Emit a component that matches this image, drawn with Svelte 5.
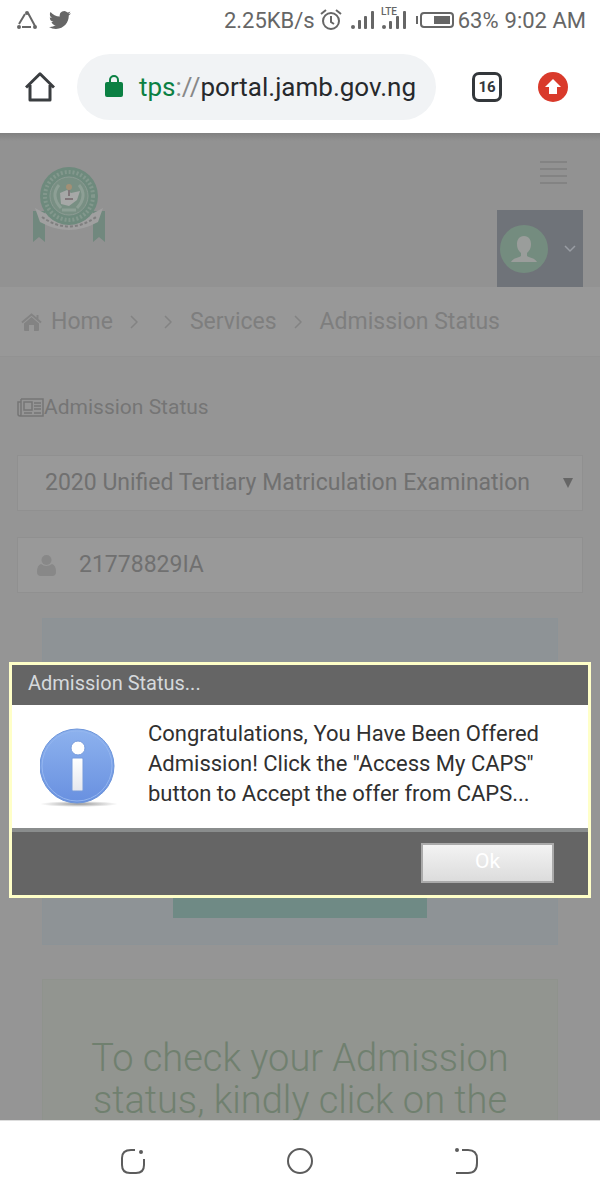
<script lang="ts">
    let examYear = "2020";
    let regNumber = "21778829IA";
    let showDialog = true;

    const crumbs = ["", "Services", "Admission Status"];

    const closeDialog = () => {
        showDialog = false;
    }
</script>

<div class="screen">
    <div class="status-bar">
        <div class="status-left">
            <svg width="20" height="18" viewBox="0 0 20 18" fill="none" stroke="#666" stroke-width="2"><path d="M8 3L2 13M11 2l7 13M5 16h9"/><circle cx="10" cy="2" r="1" fill="#666"/><circle cx="2" cy="16" r="1" fill="#666"/><circle cx="18" cy="16" r="1" fill="#666"/></svg>
            <svg width="22" height="20" viewBox="0 2 24 20" fill="#666"><path d="M23.95 4.57a10 10 0 01-2.82.77 4.96 4.96 0 002.16-2.72c-.95.55-2 .95-3.13 1.18a4.92 4.92 0 00-8.38 4.48C7.69 8.09 4.07 6.13 1.64 3.16a4.82 4.82 0 00-.67 2.48c0 1.71.87 3.21 2.19 4.1a4.9 4.9 0 01-2.23-.62v.06a4.92 4.92 0 003.95 4.83 5 5 0 01-2.21.08 4.94 4.94 0 004.6 3.42A9.87 9.87 0 010 19.54a14 14 0 007.55 2.21c9.05 0 14-7.5 14-13.98 0-.21 0-.42-.02-.63a9.94 9.94 0 002.46-2.55z"/></svg>
        </div>
        <div class="status-right">
            <span>2.25KB/s</span>
            <svg class="alarm" width="22" height="22" viewBox="0 0 22 22" fill="none" stroke="#666" stroke-width="2"><circle cx="11" cy="12" r="8"/><path d="M11 7v6l3 2M1 5l5-4M21 5l-5-4"/></svg>
            <svg class="signal" width="58" height="28" viewBox="0 0 58 28" fill="#666"><circle cx="3" cy="25" r="2"/><rect x="8" y="18" width="3" height="9" rx="1"/><rect x="14" y="14" width="3" height="13" rx="1"/><rect x="21" y="9" width="3" height="18" rx="1"/><circle cx="34" cy="25" r="2"/><rect x="39" y="19" width="3" height="8" rx="1"/><rect x="46" y="14" width="3" height="13" rx="1"/><rect x="53" y="9" width="3" height="18" rx="1"/><text x="31" y="13" font-size="10" font-weight="500">LTE</text></svg>
            <svg class="battery" width="38" height="16" viewBox="0 0 38 16"><rect x="0" y="4" width="2" height="8" fill="#666"/><rect x="5" y="1" width="32" height="14" rx="3" fill="none" stroke="#666" stroke-width="2"/><rect x="18" y="4" width="16" height="8" fill="#666"/></svg>
            <span>63%</span>
            <span class="clock">9:02 AM</span>
        </div>
    </div>

    <div class="browser-bar">
        <button class="icon-btn" aria-label="Home page">
            <svg width="30" height="30" viewBox="0 0 30 30" fill="none" stroke="#3a3d40" stroke-width="3"><path d="M1 15.500L15 1.800l14 13.700M5 13v15h20V13" stroke-linejoin="round"/></svg>
        </button>
        <div class="address">
            <svg width="18" height="23" viewBox="0 0 18 23"><rect y="7" width="18" height="15" rx="2" fill="#0b8043"/><path d="M5 8V5a4 4 0 018 0v3" fill="none" stroke="#0b8043" stroke-width="2"/></svg>
            <div class="url"><span class="scheme">tps</span><span class="slashes">://</span>portal.jamb.gov.ng</div>
        </div>
        <button class="tabs">16</button>
        <button class="icon-btn" aria-label="Update">
            <svg width="30" height="30" viewBox="0 0 30 30"><circle cx="15" cy="15" r="15" fill="#d93a2b"/><path d="M15 7l8 8h-4v7h-8v-7H7z" fill="#fff"/></svg>
        </button>
    </div>

    <div class="viewport">
        <div class="site-header">
            <svg class="logo" width="74" height="80" viewBox="0 0 74 80">
                <path d="M1 46h12v31l-6-5-6 5zM61 46h12v31l-6-5-6 5z" fill="#71887e"/>
                <path d="M3 43Q37 64 71 43L66 57Q37 73 8 57z" fill="#a0a0a0"/>
                <circle cx="37" cy="31" r="29" fill="#6e8a7d"/>
                <circle cx="37" cy="31" r="24" fill="none" stroke="#83988d" stroke-width="4" stroke-dasharray="2 2"/>
                <circle cx="37" cy="31" r="19" fill="#788f83" stroke="#8d9c94" stroke-width="1"/>
                <path d="M27 20q-9 11 2 23M47 20q9 11-2 23" fill="none" stroke="#8d9f95" stroke-width="3"/>
                <path d="M28 28l7-3 4 3 9-2-3 9-4 3-4 3-8-2z" fill="#a6a8a7"/>
                <path d="M30 45h14" stroke="#8d9f95" stroke-width="3"/>
                <circle cx="37" cy="22" r="3" fill="#a29075"/><path d="M37 25v6M33 34h8" stroke="#807679" stroke-width="2"/>
                <path d="M10 52Q37 71 64 52" fill="none" stroke="#7f7f7f" stroke-width="2" stroke-dasharray="3 2"/>
            </svg>
            <div class="header-right">
                <button class="menu" aria-label="Menu"><span></span><span></span><span></span><span></span></button>
                <button class="account" aria-label="Account">
                    <svg width="48" height="48" viewBox="0 0 48 48"><circle cx="24" cy="24" r="24" fill="#748c7f"/><path d="M24 11c-5 0-7 4-7 8 0 5 2 7 4 9v3c-3 2-8 2-10 6h26c-2-4-7-4-10-6v-3c2-2 4-4 4-9 0-4-2-8-7-8z" fill="#9a9d9b"/></svg>
                    <svg width="12" height="8" viewBox="0 0 12 8" fill="none" stroke="#999da3" stroke-width="1.500"><path d="M1 1l5 5 5-5"/></svg>
                </button>
            </div>
        </div>

        <nav class="crumbs">
            <a href="#home"><svg width="21" height="18" viewBox="0 0 21 18" fill="#838383"><path d="M10.500 4L18 10.500V17a1 1 0 01-1 1h-4v-6H8v6H4a1 1 0 01-1-1v-6.500z"/><path d="M1 9.500L10.500 1.500 20 9.500M16.500 2v5" fill="none" stroke="#838383" stroke-width="2"/></svg>Home</a>
            {#each crumbs as crumb}
                <svg class="sep" width="8" height="14" viewBox="0 0 8 14" fill="none" stroke="#838383" stroke-width="1.500"><path d="M1 1l6 6-6 6"/></svg>
                {#if crumb !== ""}
                    <a href="#crumb">{crumb}</a>
                {/if}
            {/each}
        </nav>

        <div class="content">
            <h1>
                <svg width="27" height="19" viewBox="0 0 27 19" fill="none" stroke="#757575" stroke-width="1.500"><path d="M4 1h22v17H3q-2 0-2-2V4h3M4 1v15q0 2-1 2M7 4h8v8H7zM17 5h7M17 8h7M17 11h7M7 15h8M17 15h7"/></svg>Admission Status
            </h1>
            <div class="select-box">
                <select bind:value={examYear} aria-label="Examination">
                    <option value="2020">2020 Unified Tertiary Matriculation Examination</option>
                </select>
                <span class="arrow"></span>
            </div>
            <label class="input-box">
                <svg width="19" height="21" viewBox="0 0 19 21" fill="#888"><circle cx="9.500" cy="5" r="5"/><path d="M4 9q5 4 11 0 4 1 4 8 0 4-4 4H4q-4 0-4-4 0-7 4-8z"/></svg>
                <input type="text" bind:value={regNumber} aria-label="Registration number" />
            </label>
            <div class="card caps">
                <button class="access">Access My CAPS</button>
            </div>
            <div class="card hint">
                <h2>To check your Admission status, kindly click on the</h2>
            </div>
        </div>

        {#if showDialog}
            <div class="overlay">
                <div class="dialog" role="dialog" aria-labelledby="dialog-title">
                    <div class="dialog-title" id="dialog-title">Admission Status...</div>
                    <div class="dialog-body">
                        <svg width="80" height="80" viewBox="0 0 80 80">
                            <defs>
                                <linearGradient id="blue" x1="0" y1="0" x2="0" y2="1"><stop offset="0" stop-color="#8db2ee"/><stop offset="1" stop-color="#6890e0"/></linearGradient>
                                <linearGradient id="stem" x1="0" y1="0" x2="0" y2="1"><stop offset="0" stop-color="#fff"/><stop offset="1" stop-color="#e6e8ee"/></linearGradient>
                                <radialGradient id="shade"><stop offset="0" stop-color="#999"/><stop offset="1" stop-color="#fff"/></radialGradient>
                            </defs>
                            <ellipse cx="39" cy="76" rx="39" ry="3" fill="url(#shade)"/>
                            <circle cx="37" cy="38" r="37" fill="url(#blue)" stroke="#6d95da"/>
                            <circle cx="37" cy="38" r="35" fill="none" stroke="#94b6ef"/>
                            <circle cx="38" cy="20" r="7" fill="#fff" stroke="#769bdc"/>
                            <rect x="32" y="30" width="11" height="33" rx="1" fill="url(#stem)" stroke="#769bdc"/>
                        </svg>
                        <p>Congratulations, You Have Been Offered Admission! Click the "Access My CAPS" button to Accept the offer from CAPS...</p>
                    </div>
                    <div class="dialog-footer">
                        <button class="ok" on:click={closeDialog}>Ok</button>
                    </div>
                </div>
            </div>
        {/if}
    </div>

    <div class="nav-bar">
        <button class="icon-btn" aria-label="Recent apps">
            <svg width="26" height="26" viewBox="0 0 26 26" fill="none" stroke="#5c5c5c" stroke-width="2"><path d="M15 2H11Q2 2 2 10v7q0 8 8 8h6q8 0 8-8v-6"/><circle cx="21" cy="4" r="1" fill="#5c5c5c"/></svg>
        </button>
        <button class="icon-btn" aria-label="Home">
            <svg width="28" height="28" viewBox="0 0 28 28" fill="none" stroke="#5c5c5c" stroke-width="2"><circle cx="14" cy="14" r="12"/></svg>
        </button>
        <button class="icon-btn" aria-label="Back">
            <svg width="26" height="26" viewBox="0 0 26 26" fill="none" stroke="#5c5c5c" stroke-width="2"><path d="M8 2h6q9 0 9 9v4q0 10-9 10H2"/><circle cx="3" cy="2" r="1" fill="#5c5c5c"/></svg>
        </button>
    </div>
</div>

<style>
    :global(body) {
        margin: 0;
    }
    .screen {
        display: flex;
        flex-direction: column;
        height: 100vh;
        background: #fff;
        font-family: Roboto, "Liberation Sans", sans-serif;
    }
    button, input, select {
        font-family: inherit;
    }
    button {
        cursor: pointer;
    }
    svg {
        display: block;
        flex: none;
    }
    .icon-btn {
        padding: 0;
        border: 0;
        background: none;
    }

    .status-bar {
        display: flex;
        justify-content: space-between;
        align-items: center;
        height: 40px;
        padding: 0 14px 0 17px;
        color: #666;
        font-size: 22px;
    }
    .status-left, .status-right {
        display: flex;
        align-items: center;
    }
    .status-left {
        gap: 12px;
    }
    .alarm {
        margin: 0 8px 0 5px;
    }
    .signal {
        margin: 0 8px 8px 0;
    }
    .battery {
        margin-right: 4px;
    }
    .clock {
        margin-left: 6px;
    }

    .browser-bar {
        display: flex;
        align-items: center;
        height: 93px;
        padding: 0 32px 0 25px;
    }
    .address {
        display: flex;
        flex: 1;
        align-items: center;
        gap: 16px;
        min-width: 0;
        height: 66px;
        margin: 0 36px 0 22px;
        padding: 0 16px 0 28px;
        box-sizing: border-box;
        border-radius: 33px;
        background: #f1f3f5;
    }
    .url {
        color: #27292c;
        font-size: 26px;
        white-space: nowrap;
    }
    .scheme {
        color: #0b8043;
    }
    .slashes {
        color: #888;
    }
    .tabs {
        flex: none;
        width: 30px;
        height: 30px;
        margin-right: 36px;
        padding: 0;
        border: 3px solid #33373b;
        border-radius: 7px;
        background: none;
        color: #33373b;
        font-size: 15px;
        font-weight: 700;
    }

    .viewport {
        position: relative;
        flex: 1;
        min-height: 0;
        overflow: hidden;
        background: #959595;
    }
    .site-header {
        display: flex;
        justify-content: space-between;
        height: 154px;
        padding: 0 17px 0 32px;
        box-sizing: border-box;
        background: linear-gradient(#808080, #929292 8px);
    }
    .logo {
        margin-top: 32px;
    }
    .header-right {
        display: flex;
        flex-direction: column;
        justify-content: space-between;
        align-items: flex-end;
    }
    .menu {
        display: flex;
        flex-direction: column;
        gap: 5px;
        margin: 28px 16px 0 0;
        padding: 0;
        border: 0;
        background: none;
    }
    .menu span {
        width: 27px;
        height: 2px;
        background: #838383;
    }
    .account {
        display: flex;
        align-items: center;
        gap: 16px;
        width: 86px;
        height: 77px;
        padding: 0 3px;
        border: 0;
        background: #6f7379;
    }

    .crumbs {
        display: flex;
        align-items: center;
        height: 70px;
        padding: 0 21px;
        box-sizing: border-box;
        border-bottom: 1px solid #929292;
        background: #989898;
        font-size: 23px;
    }
    .crumbs a {
        display: flex;
        align-items: center;
        gap: 9px;
        margin-right: 4px;
        color: #7e7e7e;
        text-decoration: none;
    }
    .crumbs a:not(:first-child) {
        margin-left: 5px;
    }
    .sep {
        margin: 0 13px;
    }

    .content {
        padding: 36px 17px 0;
    }
    h1 {
        display: flex;
        align-items: center;
        height: 28px;
        margin: 0 0 34px;
        color: #757575;
        font-size: 21px;
        font-weight: 400;
    }
    .select-box, .input-box {
        display: flex;
        align-items: center;
        height: 56px;
        box-sizing: border-box;
        border: 1px solid #909090;
        background: #999;
    }
    .select-box {
        margin-bottom: 26px;
        padding: 0 9px 0 27px;
    }
    select, input {
        flex: 1;
        min-width: 0;
        padding: 0 0 2px;
        border: 0;
        outline: 0;
        background: none;
        color: #707070;
        font-size: 23px;
    }
    select {
        margin-right: 26px;
        appearance: none;
    }
    .arrow {
        border: 5px solid transparent;
        border-top: 10px solid #666;
        border-bottom: 0;
    }
    .input-box {
        margin-bottom: 25px;
        padding: 0 19px;
        gap: 23px;
    }
    .card {
        margin: 0 25px 34px;
        box-sizing: border-box;
    }
    .caps {
        display: flex;
        justify-content: center;
        align-items: flex-end;
        height: 327px;
        padding-bottom: 26px;
        border: 1px solid #8c9397;
        background: #8e9396;
    }
    .access {
        width: 254px;
        height: 60px;
        padding: 0 0 8px;
        border: 0;
        background: #6f8a85;
        color: #a0a8a6;
        font-size: 23px;
    }
    .hint {
        padding: 57px 32px;
        border: 1px solid #8f938d;
        background: #929590;
    }
    h2 {
        margin: 0;
        color: #70806f;
        font-size: 38px;
        font-weight: 300;
        line-height: 42px;
        text-align: center;
    }

    .overlay {
        position: absolute;
        inset: 0;
        padding: 529px 9px 0;
    }
    .dialog {
        border: 3px solid #ffffc8;
        background: #fff;
    }
    .dialog-title {
        padding: 0 16px 4px;
        background: #656565;
        color: #d5d9dc;
        font-size: 20px;
        line-height: 36px;
    }
    .dialog-body {
        display: flex;
        gap: 28px;
        padding: 14px 28px 19px;
    }
    .dialog-body svg {
        margin-top: 9px;
    }
    .dialog-body p {
        margin: 0;
        color: #303030;
        font-size: 22px;
        line-height: 30px;
    }
    .dialog-footer {
        display: flex;
        justify-content: flex-end;
        padding: 11px 34px 12px;
        border-top: 4px solid #8a8d8d;
        background: #656565;
    }
    .ok {
        width: 133px;
        height: 40px;
        padding: 0 0 4px;
        border: 2px solid #aaa;
        background: linear-gradient(#f3f3f3, #dcdcdc);
        color: #fff;
        font-size: 21px;
    }

    .nav-bar {
        display: flex;
        justify-content: space-between;
        align-items: center;
        height: 79px;
        padding: 0 120px;
        border-top: 1px solid #ddd;
    }
</style>
